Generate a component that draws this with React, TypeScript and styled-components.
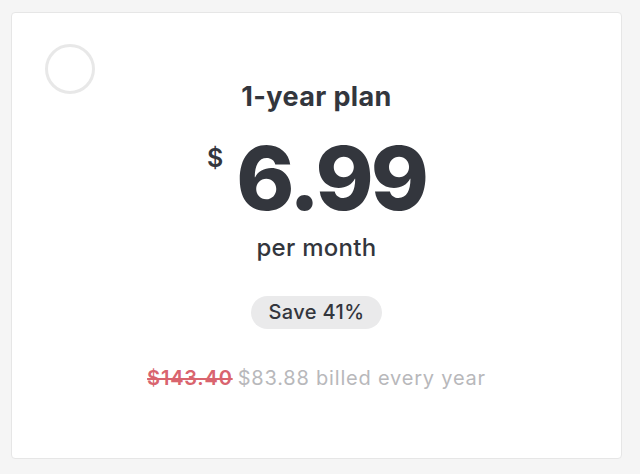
import React from 'react';
import styled, { createGlobalStyle } from 'styled-components';

const GlobalStyle = createGlobalStyle`
  html, body {
    margin: 0;
    padding: 0;
    background: #f5f5f5;
  }
  body {
    font-family: Inter, "Noto Sans", sans-serif;
  }
`;

const Page = styled.div`
  padding: 12px 18px 15px 11px;
  box-sizing: border-box;
  height: 474px;
`;

const Card = styled.section`
  position: relative;
  height: 100%;
  box-sizing: border-box;
  background: #fff;
  border: 1px solid #e6e6e6;
  border-radius: 4px;
  display: flex;
  flex-direction: column;
  align-items: center;
  padding-top: 68px;
  color: #33363d;
`;

const Radio = styled.span`
  position: absolute;
  left: 33px;
  top: 31px;
  width: 44px;
  height: 44px;
  border: 3px solid #e8e8e8;
  border-radius: 50%;
`;

const Title = styled.h2`
  margin: 0;
  font-size: 27px;
  font-weight: 700;
  line-height: 32px;
  letter-spacing: 0.4px;
`;

const PriceRow = styled.div`
  display: flex;
  align-items: flex-start;
  margin-top: 27px;
`;

const Currency = styled.span`
  font-size: 25px;
  font-weight: 600;
  line-height: 1;
  margin-top: 6px;
  margin-right: 13px;
`;

const Amount = styled.span`
  font-size: 88px;
  font-weight: 800;
  line-height: 76px;
  letter-spacing: -3px;
`;

const Period = styled.div`
  margin-top: 18px;
  font-size: 24px;
  font-weight: 500;
  line-height: 28px;
  letter-spacing: 0.3px;
`;

const Badge = styled.span`
  margin-top: 34px;
  padding: 5px 17px;
  border-radius: 999px;
  background: #eaeaeb;
  font-size: 20px;
  font-weight: 500;
  line-height: 23px;
  letter-spacing: 0.4px;
`;

const Billing = styled.p`
  margin: 37px 0 0;
  font-size: 20px;
  line-height: 24px;
  letter-spacing: 0.8px;
  color: #b8b8bb;
`;

const OldPrice = styled.s`
  color: #d9646e;
  font-weight: 600;
  margin-right: 5px;
`;

export default function App() {
  return (
    <>
      <GlobalStyle />
      <Page>
        <Card>
          <Radio />
          <Title>1-year plan</Title>
          <PriceRow>
            <Currency>$</Currency>
            <Amount>6.99</Amount>
          </PriceRow>
          <Period>per month</Period>
          <Badge>Save 41%</Badge>
          <Billing>
            <OldPrice>$143.40</OldPrice>$83.88 billed every year
          </Billing>
        </Card>
      </Page>
    </>
  );
}
